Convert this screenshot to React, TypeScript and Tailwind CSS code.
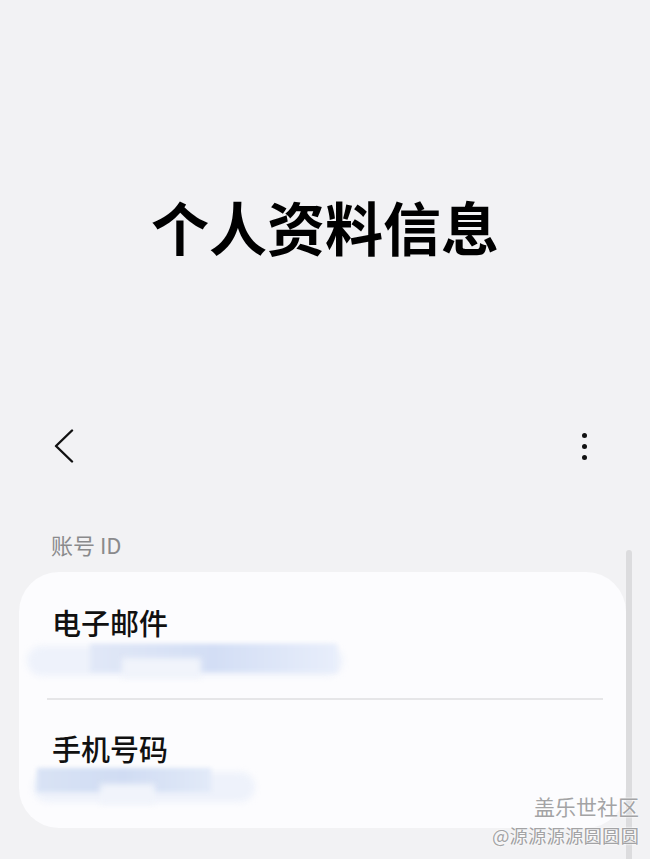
import React from "react";

const font = { fontFamily: '"Noto Sans CJK SC", "Noto Sans", sans-serif' };

function BlurredValue({ width, tone }: { width: string; tone: "a" | "b" }) {
  return (
    <div className={`relative h-[40px] ${width}`}>
      <div className="absolute inset-x-0 top-[6px] bottom-[4px] rounded-full bg-[#eef2fb] blur-[3px]" />
      <div
        className={
          tone === "a"
            ? "absolute left-[20%] right-[2%] top-[4px] bottom-[8px] bg-gradient-to-r from-[#e1e8f7] via-[#d3def5] to-[#e8eefb] blur-[2px]"
            : "absolute left-[2%] right-[20%] top-[2px] bottom-[14px] bg-gradient-to-r from-[#d9e3f5] via-[#d0dcf3] to-[#e2eaf8] blur-[2px]"
        }
      />
      <div className="absolute left-[30%] right-[45%] top-[18px] bottom-[2px] bg-[#f1f4fb] blur-[3px]" />
    </div>
  );
}

export default function App() {
  return (
    <div className="relative min-h-[859px] h-[859px] overflow-hidden bg-[#f2f2f4]" style={font}>
      {/* Header title */}
      <div className="h-[418px] pt-[197px] flex justify-center">
        <h1 className="text-[58px] leading-[58px] font-bold text-black">个人资料信息</h1>
      </div>

      {/* Toolbar */}
      <div className="h-[56px] flex items-center justify-between pl-[53px] pr-[63px]">
        <svg width="22" height="34" viewBox="0 0 22 34" fill="none">
          <path d="M19 1.5 L3 17 L19 32.5" stroke="#111" strokeWidth="2.4" strokeLinecap="round" strokeLinejoin="round" />
        </svg>
        <div className="flex flex-col gap-[6px] items-center">
          <span className="w-[5px] h-[5px] rounded-full bg-[#111]" />
          <span className="w-[5px] h-[5px] rounded-full bg-[#111]" />
          <span className="w-[5px] h-[5px] rounded-full bg-[#111]" />
        </div>
      </div>

      {/* Section label */}
      <div className="pt-[57px] pl-[51px] h-[98px]">
        <div className="text-[22px] leading-[26px] text-[#8a8a8c]">账号 ID</div>
      </div>

      {/* Card */}
      <div className="ml-[19px] mr-[24px] h-[256px] rounded-[40px] bg-[#fcfcfe] pt-[32px]">
        <div className="pl-[33px]">
          <div className="text-[29px] leading-[36px] font-medium text-[#111]">电子邮件</div>
          <div className="-ml-[25px]">
            <BlurredValue width="w-[316px]" tone="a" />
          </div>
        </div>
        <div className="mt-[18px] ml-[28px] mr-[23px] h-[2px] bg-[#e6e6e8]" />
        <div className="pl-[33px] pt-[30px]">
          <div className="text-[29px] leading-[36px] font-medium text-[#111]">手机号码</div>
          <div className="-ml-[19px]">
            <BlurredValue width="w-[222px]" tone="b" />
          </div>
        </div>
      </div>

      {/* Scrollbar */}
      <div className="absolute left-[626px] top-[550px] w-[6px] h-[320px] rounded-full bg-[#dcdcde]" />

      {/* Watermark */}
      <div
        className="absolute right-[11px] top-[793px] flex flex-col items-end text-[#a3a3a5]"
        style={{ textShadow: "0 0 2px #fff, 0 0 2px #fff" }}
      >
        <div className="text-[21px] leading-[26px]">盖乐世社区</div>
        <div className="text-[18.5px] leading-[22px] mt-[5px]">@源源源源圆圆圆</div>
      </div>
    </div>
  );
}
